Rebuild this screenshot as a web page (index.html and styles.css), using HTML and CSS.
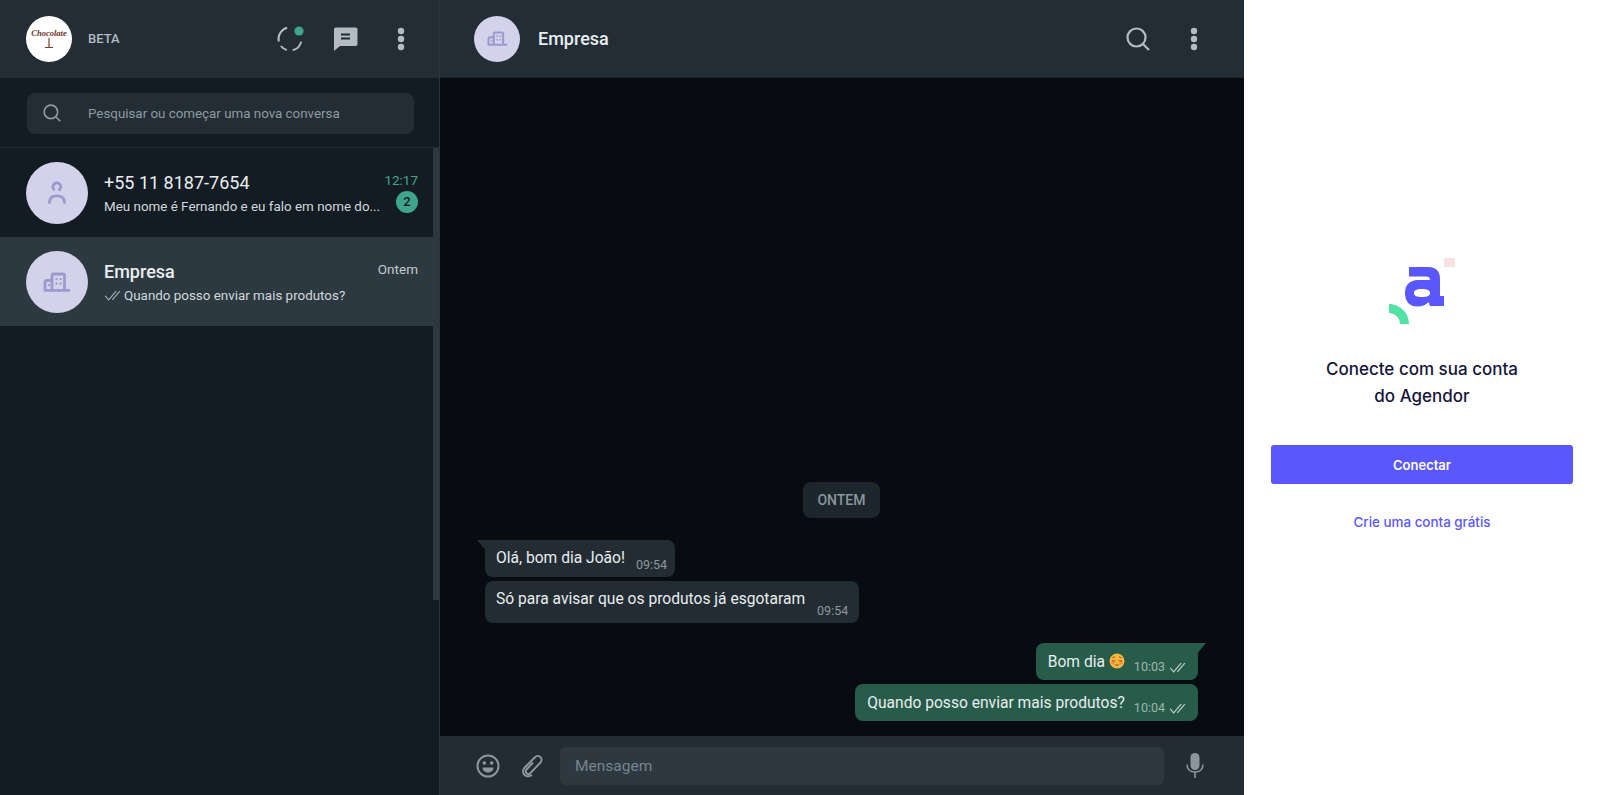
FILE: index.html
```html
<!DOCTYPE html>
<html>
<head>
    <meta charset="UTF-8">
    <title>Empresa</title>
    <link rel="stylesheet" href="styles.css">
</head>
<body>
    <!-- shared icons -->
    <svg class="sprites" width="0" height="0">
        <symbol id="building" viewBox="0 0 28 20">
            <path d="M9 18V3.500C9 2.600 9.600 2 10.500 2H20C21 2 21.500 2.600 21.500 3.500V18M9 8.500H4C2.800 8.500 2 9.300 2 10.500V18M0.800 18.300H27" fill="none" stroke="currentColor" stroke-width="2.800"/>
            <path d="M12.500 6h2v2h-2zM16.500 6h2v2h-2zM12.500 10.500h2v2h-2zM16.500 10.500h2v2h-2zM5 12h2v2H5z" fill="currentColor"/>
        </symbol>
        <symbol id="checks" viewBox="0 0 18 12">
            <path d="M1 6.500L4.800 10.800L13 1.200M8.800 10.800L17 1.200" fill="none" stroke="currentColor" stroke-width="1.200"/>
        </symbol>
        <symbol id="dots" viewBox="0 0 8 24">
            <circle cx="4" cy="4" r="3.200"/><circle cx="4" cy="12" r="3.200"/><circle cx="4" cy="20" r="3.200"/>
        </symbol>
        <symbol id="search" viewBox="0 0 24 24">
            <circle cx="10.500" cy="10.500" r="9" fill="none" stroke="currentColor" stroke-width="2.200"/>
            <path d="M17 17l6 6" stroke="currentColor" stroke-width="2.200"/>
        </symbol>
    </svg>

    <div class="app">
        <aside class="sidebar">
            <header class="side-head">
                <div class="logo-avatar">
                    <span class="logo-word">Chocolate</span>
                    <svg class="logo-glass" width="10" height="11" viewBox="0 0 10 11"><path d="M5 0v9M1 9.500h8" stroke="#7a3a2c" stroke-width="1.200"/></svg>
                </div>
                <span class="beta">BETA</span>
                <div class="side-actions">
                    <svg class="icon-status" width="30" height="27" viewBox="0 0 30 27">
                        <g fill="none" stroke="#b4bbc1" stroke-width="2">
                            <path d="M11.200 1.800A11.500 11.500 0 0 0 2.800 15.600"/>
                            <path d="M4.900 20A11.500 11.500 0 0 0 10.700 24"/>
                            <path d="M16.700 24.200A11.500 11.500 0 0 0 25.200 15.600"/>
                        </g>
                        <circle cx="23" cy="5" r="4.600" fill="#3fa58a"/>
                    </svg>
                    <svg class="icon-chat" width="25" height="24" viewBox="0 0 25 24">
                        <path d="M3 0.500H22.500C23.900 0.500 24.500 1.200 24.500 2.500V17C24.500 18.300 23.900 19 22.500 19H7L1 24V2.500C1 1.200 1.700 0.500 3 0.500Z" fill="#b4bbc1"/>
                        <path d="M8 7.500H17M8 11.500H17" stroke="#232d35" stroke-width="1.800"/>
                    </svg>
                    <svg class="icon-dots" width="8" height="24"><use href="#dots"/></svg>
                </div>
            </header>

            <div class="search-wrap">
                <div class="search-box">
                    <svg class="search-icon" width="18" height="18"><use href="#search"/></svg>
                    <span>Pesquisar ou começar uma nova conversa</span>
                </div>
            </div>

            <div class="list-wrap">
                <div class="chat-list">
                    <div class="chat-row">
                        <div class="avatar">
                            <svg width="20" height="24" viewBox="0 0 20 24">
                                <path d="M6.800 8.300A3.900 3.900 0 1 1 12.300 8.800M2.500 21.500C2.500 16.800 5.300 14.800 10 14.800S17.500 16.800 17.500 21.500" fill="none" stroke="#9c99cc" stroke-width="2.800" stroke-linecap="round"/>
                            </svg>
                        </div>
                        <div class="row-body">
                            <div class="row-line">
                                <span class="row-name row-name-plain">+55 11 8187-7654</span>
                                <span class="row-time row-time-new">12:17</span>
                            </div>
                            <div class="row-line">
                                <span class="row-text">Meu nome é Fernando e eu falo em nome do...</span>
                                <span class="badge">2</span>
                            </div>
                        </div>
                    </div>
                    <div class="chat-row chat-row-active">
                        <div class="avatar">
                            <svg width="28" height="20" class="building-icon"><use href="#building"/></svg>
                        </div>
                        <div class="row-body">
                            <div class="row-line">
                                <span class="row-name">Empresa</span>
                                <span class="row-time">Ontem</span>
                            </div>
                            <div class="row-line">
                                <span class="row-text"><svg class="row-checks" width="17" height="11"><use href="#checks"/></svg>Quando posso enviar mais produtos?</span>
                            </div>
                        </div>
                    </div>
                </div>
                <div class="scrollbar"></div>
            </div>
        </aside>

        <main class="chat">
            <header class="chat-head">
                <div class="avatar avatar-small">
                    <svg width="21" height="15" class="building-icon"><use href="#building"/></svg>
                </div>
                <span class="chat-name">Empresa</span>
                <div class="chat-actions">
                    <svg class="icon-search" width="24" height="24"><use href="#search"/></svg>
                    <svg class="icon-dots" width="8" height="24"><use href="#dots"/></svg>
                </div>
            </header>

            <section class="messages">
                <div class="day">ONTEM</div>
                <div class="msg msg-in msg-first">
                    <span>Olá, bom dia João!</span>
                    <span class="msg-time">09:54</span>
                </div>
                <div class="msg msg-in msg-tall">
                    <span>Só para avisar que os produtos já esgotaram</span>
                    <span class="msg-time">09:54</span>
                </div>
                <div class="msg msg-out msg-first msg-gap">
                    <span class="msg-text-short">Bom dia
                        <svg class="emoji" width="16" height="16" viewBox="0 0 16 16">
                            <circle cx="8" cy="8" r="7.500" fill="#fab63c"/>
                            <circle cx="3.800" cy="9.800" r="1.800" fill="#f58a4c"/>
                            <circle cx="12.200" cy="9.800" r="1.800" fill="#f58a4c"/>
                            <path d="M3 7.300C4 8.200 5.500 8.200 6.400 7.300M9.600 7.300C10.500 8.200 12 8.200 13 7.300M6 11.500C7.300 12.500 8.700 12.500 10 11.500M3.500 4.800L6 3.800M12.500 4.800L10 3.800" fill="none" stroke="#7a4a1e" stroke-width="0.900"/>
                        </svg>
                    </span>
                    <span class="msg-time">10:03<svg class="msg-checks" width="17" height="11"><use href="#checks"/></svg></span>
                </div>
                <div class="msg msg-out">
                    <span>Quando posso enviar mais produtos?</span>
                    <span class="msg-time">10:04<svg class="msg-checks" width="17" height="11"><use href="#checks"/></svg></span>
                </div>
            </section>

            <footer class="composer">
                <svg class="icon-emoji" width="24" height="24" viewBox="0 0 24 24">
                    <circle cx="12" cy="12" r="10.500" fill="none" stroke="#8b969e" stroke-width="2"/>
                    <circle cx="8.300" cy="9" r="1.800" fill="#8b969e"/>
                    <circle cx="15.700" cy="9" r="1.800" fill="#8b969e"/>
                    <path d="M6.500 13.500H17.500C17.300 16.700 15 18.500 12 18.500S6.700 16.700 6.500 13.500Z" fill="#8b969e"/>
                </svg>
                <svg class="icon-clip" width="22" height="24" viewBox="0 0 22 24">
                    <path d="M12 8.500L5.500 15.500A2.600 2.600 0 0 0 9.300 19.100L19.500 8.500A3.800 3.800 0 0 0 14 3.200L3.500 13.800A5 5 0 0 0 10.800 20.800" fill="none" stroke="#8b969e" stroke-width="2"/>
                </svg>
                <div class="msg-input">Mensagem</div>
                <svg class="icon-mic" width="18" height="25" viewBox="0 0 18 25">
                    <rect x="4.500" y="0" width="9" height="17" rx="4.500" fill="#8b969e"/>
                    <path d="M1 11.500C1 16.500 4.500 19 9 19S17 16.500 17 11.500M9 19V25" fill="none" stroke="#8b969e" stroke-width="1.600"/>
                </svg>
            </footer>
        </main>

        <section class="panel">
            <svg class="brand" width="66" height="66" viewBox="49 18 66 66">
                <rect x="104" y="18" width="11" height="9" fill="#f7e1e1"/>
                <path d="M69 27H88C96 27 100 31 100 39V56H104V66H90L88.500 62C86 65 82 66.500 77 66.500C69 66.500 65 61 65 53C65 45 70 40 78 40H90C90 37 88 36.500 85 36.500H69ZM74 53C74 56 77 57 82 57C87 57 90 56 90 53C90 50 87 49 82 49C77 49 74 50 74 53Z" fill="#5b57ff" fill-rule="evenodd"/>
                <path d="M49 64C60 64 69 73 69 84H60C60 78 55 73 49 73Z" fill="#52e3a4"/>
            </svg>
            <h1 class="panel-title">Conecte com sua conta<br>do Agendor</h1>
            <button class="connect" type="button">Conectar</button>
            <a class="signup">Crie uma conta grátis</a>
        </section>
    </div>
</body>
</html>
```

FILE: styles.css
```css
* {
    box-sizing: border-box;
}
html, body {
    height: 100%;
}
body {
    margin: 0;
    overflow: hidden;
    font-family: Roboto, "Liberation Sans", sans-serif;
    background-color: #ffffff;
}
.sprites {
    display: block;
    height: 0;
}
.app {
    display: flex;
    height: 795px;
}

/* left column */
.sidebar {
    width: 440px;
    display: flex;
    flex-direction: column;
    background-color: #131c23;
    border-right: 1px solid #2a343b;
}
.side-head {
    height: 78px;
    flex: none;
    display: flex;
    align-items: center;
    padding-left: 26px;
    background-color: #232d35;
}
.logo-avatar {
    width: 46px;
    height: 46px;
    border-radius: 50%;
    background-color: #ffffff;
    display: flex;
    flex-direction: column;
    align-items: center;
    justify-content: center;
}
.logo-word {
    font-family: "Liberation Serif", serif;
    font-style: italic;
    font-weight: bold;
    font-size: 8.500px;
    line-height: 9px;
    color: #6e3328;
}
.logo-glass {
    display: block;
}
.beta {
    margin-left: 16px;
    margin-bottom: 2px;
    font-size: 13px;
    font-weight: 500;
    color: #b4bbc1;
}
.side-actions {
    margin-left: auto;
    display: flex;
    align-items: center;
    padding-right: 34px;
}
.icon-chat {
    margin-left: 27px;
    margin-right: 39px;
}
.icon-dots {
    fill: #b4bbc1;
}
.search-wrap {
    height: 70px;
    flex: none;
    padding: 15px 25px 0 27px;
    border-bottom: 1px solid #232d35;
}
.search-box {
    height: 41px;
    display: flex;
    align-items: center;
    padding: 0 0 1px 16px;
    border-radius: 8px;
    background-color: #232d35;
    color: #8f999f;
    font-size: 13.350px;
}
.search-box span {
    margin-left: 27px;
}
.search-icon {
    color: #8f999f;
}
.list-wrap {
    flex: 1;
    display: flex;
    min-height: 0;
}
.chat-list {
    flex: 1;
}
.scrollbar {
    width: 6px;
    height: 452px;
    background-color: #2d373d;
}
.chat-row {
    height: 89px;
    display: flex;
    align-items: center;
    padding: 0 15px 0 26px;
}
.chat-row-active {
    background-color: #2d3941;
}
.avatar {
    width: 62px;
    height: 62px;
    flex: none;
    border-radius: 50%;
    background-color: #d3d2ea;
    display: flex;
    align-items: center;
    justify-content: center;
}
.avatar-small {
    width: 46px;
    height: 46px;
}
.building-icon {
    color: #9c99cc;
}
.row-body {
    flex: 1;
    margin-left: 16px;
    min-width: 0;
    padding-top: 2px;
}
.row-line {
    display: flex;
    justify-content: space-between;
    align-items: center;
    height: 25px;
}
.row-name {
    margin-top: 2px;
    font-size: 18px;
    font-weight: 500;
    color: #e9edef;
}
.row-name-plain {
    font-weight: 400;
}
.row-time {
    font-size: 13.500px;
    color: #c3c9cd;
    align-self: flex-start;
    margin-top: 3px;
}
.row-time-new {
    color: #3fa58a;
}
.row-text {
    font-size: 13.400px;
    color: #d1d7db;
    white-space: nowrap;
}
.row-checks {
    color: #a2abb1;
    margin-right: 3px;
    vertical-align: -1px;
}
.badge {
    width: 22px;
    height: 22px;
    align-self: flex-start;
    margin-top: -3px;
    border-radius: 50%;
    background-color: #3fa58a;
    color: #10181e;
    font-size: 13px;
    font-weight: 500;
    text-align: center;
    line-height: 22px;
}

/* conversation */
.chat {
    width: 804px;
    display: flex;
    flex-direction: column;
    background-color: #080c10;
}
.chat-head {
    height: 78px;
    flex: none;
    display: flex;
    align-items: center;
    padding: 0 46px 0 34px;
    background-color: #232d35;
    border-bottom: 1px solid #1d262d;
}
.chat-name {
    margin-left: 18px;
    font-size: 18px;
    font-weight: 500;
    color: #e9edef;
}
.chat-actions {
    margin-left: auto;
    display: flex;
    align-items: center;
    gap: 40px;
}
.icon-search {
    color: #b4bbc1;
}
.messages {
    flex: 1;
    min-height: 0;
    display: flex;
    flex-direction: column;
    justify-content: flex-end;
    padding: 0 46px 15px 45px;
}
.day {
    align-self: center;
    height: 36px;
    width: 77px;
    margin-bottom: 22px;
    border-radius: 8px;
    background-color: #1c262c;
    color: #8b969e;
    font-size: 14px;
    font-weight: 500;
    line-height: 36px;
    text-align: center;
}
.msg {
    position: relative;
    display: flex;
    align-self: flex-start;
    height: 37px;
    padding: 8px 8px 0 11px;
    margin-bottom: 4px;
    border-radius: 8px;
    font-size: 15.600px;
    line-height: 20px;
    color: #e9edef;
}
.msg:last-child {
    margin-bottom: 0;
}
.msg-in {
    background-color: #232c33;
}
.msg-out {
    align-self: flex-end;
    padding: 9px 12px 0 12px;
    background-color: #275c4b;
}
.msg-tall {
    height: 42px;
    padding-right: 11px;
}
.msg-gap {
    margin-top: 16px;
}
.msg-first::before {
    content: "";
    position: absolute;
    top: 0;
    width: 10px;
    height: 12px;
}
.msg-in.msg-first {
    border-top-left-radius: 0;
}
.msg-in.msg-first::before {
    left: -8px;
    background-color: #232c33;
    clip-path: polygon(0 0, 100% 0, 100% 100%);
}
.msg-out.msg-first {
    border-top-right-radius: 0;
}
.msg-out.msg-first::before {
    right: -8px;
    background-color: #275c4b;
    clip-path: polygon(0 0, 100% 0, 0 100%);
}
.msg-time {
    margin-left: 11px;
    align-self: flex-end;
    margin-bottom: 5px;
    font-size: 12.500px;
    line-height: 14px;
    color: #8e979d;
    white-space: nowrap;
}
.msg-out .msg-time {
    margin-left: 9px;
    margin-bottom: 6px;
    color: #9fb5ae;
}
.msg-tall .msg-time {
    margin-left: 12px;
    margin-bottom: 5px;
}
.msg-checks {
    margin-left: 4px;
    color: #c4d1cc;
    vertical-align: -2px;
}
.emoji {
    vertical-align: -2px;
}
.msg-text-short {
    white-space: nowrap;
}
.composer {
    height: 59px;
    flex: none;
    display: flex;
    align-items: center;
    padding: 0 40px 0 36px;
    background-color: #232c33;
}
.icon-clip {
    margin-left: 21px;
}
.msg-input {
    flex: 1;
    height: 38px;
    margin-left: 17px;
    margin-right: 22px;
    padding-left: 15px;
    border-radius: 6px;
    background-color: #2d3841;
    color: #78848c;
    font-size: 15.500px;
    line-height: 38px;
}

/* connect panel */
.panel {
    flex: 1;
    display: flex;
    flex-direction: column;
    align-items: center;
    padding-top: 258px;
    background-color: #ffffff;
    font-family: Inter, "Liberation Sans", sans-serif;
}
.brand {
    display: block;
}
.panel-title {
    margin: 32px 0 0;
    font-size: 17px;
    font-weight: 500;
    line-height: 27px;
    text-align: center;
    color: #15153a;
}
.connect {
    width: 302px;
    height: 39px;
    margin-top: 35px;
    border: 0;
    border-radius: 3px;
    background-color: #5b57ff;
    color: #ffffff;
    font-family: inherit;
    font-size: 13px;
    font-weight: 600;
}
.signup {
    margin-top: 30px;
    font-size: 13.400px;
    font-weight: 500;
    color: #5b57ff;
}
```
